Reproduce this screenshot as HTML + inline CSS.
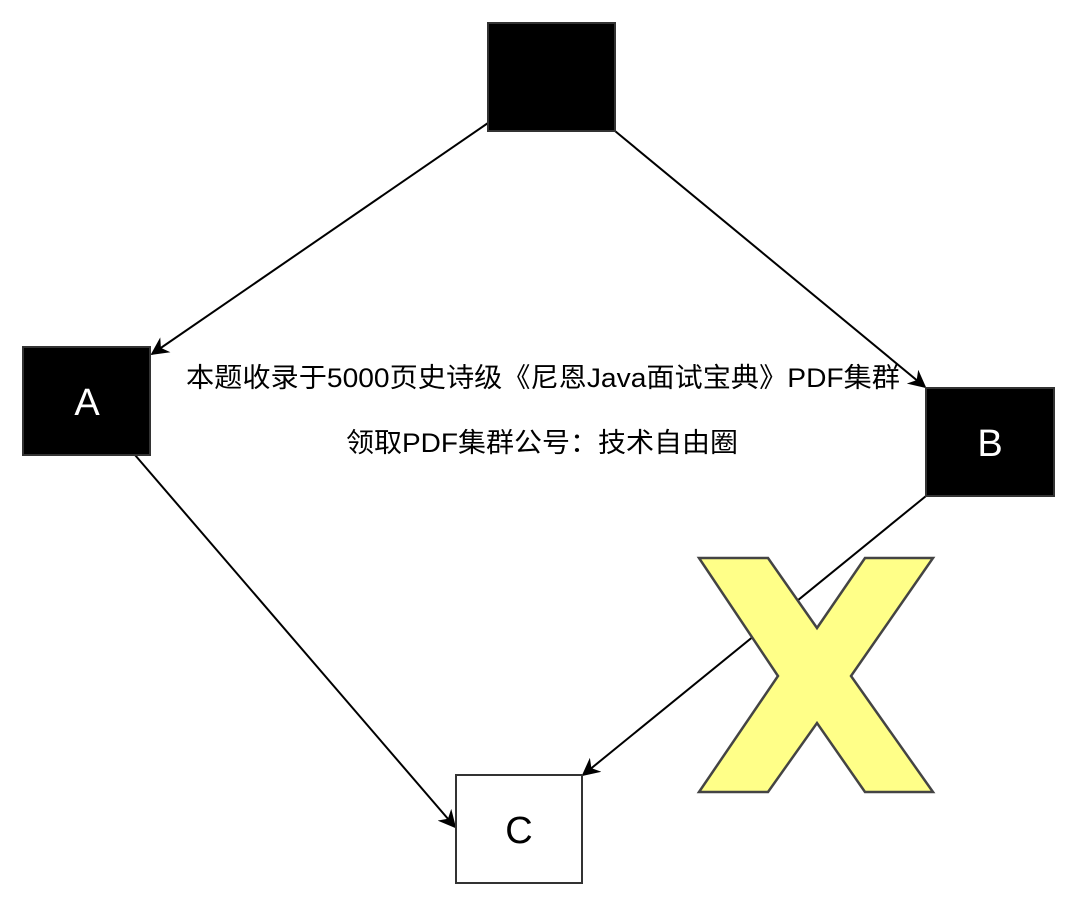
<!DOCTYPE html>
<html><head><meta charset="utf-8"><style>
body{margin:0;width:1080px;height:909px;background:#fff;overflow:hidden}
</style></head><body>
<svg width="1080" height="909" xmlns="http://www.w3.org/2000/svg" style="position:absolute;left:0;top:0">
<defs>
<marker id="a2" viewBox="0 0 10 10" refX="9" refY="5" markerWidth="18" markerHeight="18" orient="auto" markerUnits="userSpaceOnUse"><path d="M0,0 L10,5 L0,10 L3,5 Z" fill="#000"/></marker></defs>
<g stroke="#000" stroke-width="2" fill="none">
<line x1="488" y1="123" x2="152" y2="354" marker-end="url(#a2)"/>
<line x1="615" y1="131" x2="925" y2="387" marker-end="url(#a2)"/>
<line x1="135" y1="455" x2="455" y2="827" marker-end="url(#a2)"/>
<line x1="926" y1="496" x2="583" y2="775" marker-end="url(#a2)"/>
</g>
<rect x="488" y="23" width="127" height="108" fill="#000" stroke="#333" stroke-width="2"/>
<rect x="23" y="347" width="127" height="108" fill="#000" stroke="#333" stroke-width="2"/>
<rect x="926" y="388" width="128" height="108" fill="#000" stroke="#333" stroke-width="2"/>
<rect x="456" y="775" width="126" height="108" fill="#fff" stroke="#333" stroke-width="2"/>
<polygon points="699,558 768,558 817,628 865,558 933,558 851,676 933,792 865,792 817,723 768,792 699,792 778,676" fill="#ffff88" stroke="#444" stroke-width="2.5"/>
<g font-family="Liberation Sans, sans-serif" font-size="38" text-anchor="middle">
<text x="87" y="415" fill="#fff">A</text>
<text x="990" y="456" fill="#fff">B</text>
<text x="519" y="843" fill="#000">C</text>
</g>
<g font-family="Liberation Sans, Noto Sans CJK SC, sans-serif" font-size="27" fill="#000">
<text x="186" y="387" textLength="714" lengthAdjust="spacingAndGlyphs">本题收录于5000页史诗级《尼恩Java面试宝典》PDF集群</text>
<text x="346" y="452" textLength="392" lengthAdjust="spacingAndGlyphs">领取PDF集群公号：技术自由圈</text>
</g>
</svg>
</body></html>
